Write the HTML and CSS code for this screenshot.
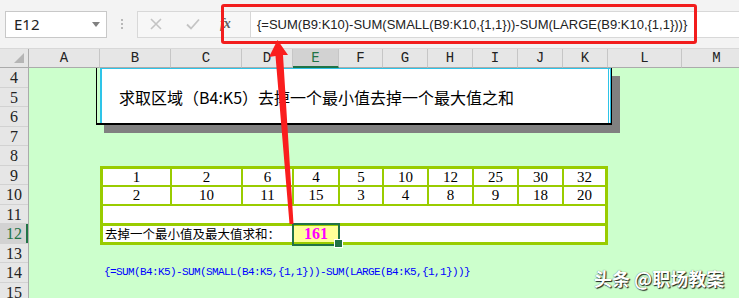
FILE: index.html
```html
<!DOCTYPE html>
<html lang="zh">
<head>
<meta charset="utf-8">
<title>Excel</title>
<link rel="stylesheet" href="styles.css">
</head>
<body>
<div class="app">
  <div class="toolbar">
    <div class="namebox"><span class="nb-text">E12</span><span class="dd"></span></div>
    <div class="dots"><i></i><i></i><i></i></div>
    <div class="fbtns">
      <svg class="ico-x" width="14" height="14" viewBox="0 0 14 14"><path d="M2 2 L12 12 M12 2 L2 12" stroke="#c4c4c4" stroke-width="1.6" fill="none"/></svg>
      <svg class="ico-ok" width="16" height="14" viewBox="0 0 16 14"><path d="M2 7.5 L6 11.5 L14 2.5" stroke="#c4c4c4" stroke-width="1.8" fill="none"/></svg>
      <span class="fx">fx</span>
    </div>
    <div class="finput">{=SUM(B9:K10)-SUM(SMALL(B9:K10,{1,1}))-SUM(LARGE(B9:K10,{1,1}))}</div>
    <div class="redbox"></div>
  </div>
  <div class="colheads">
    <div class="corner"><span class="tri"></span></div>
    <div class="ch w-a">A</div>
    <div class="ch w-b">B</div>
    <div class="ch w-c">C</div>
    <div class="ch w-d">D</div>
    <div class="ch w-e active">E</div>
    <div class="ch w-f">F</div>
    <div class="ch w-g">G</div>
    <div class="ch w-h">H</div>
    <div class="ch w-i">I</div>
    <div class="ch w-j">J</div>
    <div class="ch w-k">K</div>
    <div class="ch w-l">L</div>
    <div class="ch w-m">M</div>
  </div>
  <div class="sheet">
    <div class="rowheads">
      <div class="rh">4</div>
      <div class="rh">5</div>
      <div class="rh">6</div>
      <div class="rh">7</div>
      <div class="rh">8</div>
      <div class="rh">9</div>
      <div class="rh">10</div>
      <div class="rh">11</div>
      <div class="rh active">12</div>
      <div class="rh">13</div>
      <div class="rh">14</div>
      <div class="rh">15</div>
    </div>
    <div class="cells">
      <div class="textbox">
        <div class="tb-inner">求取区域（B4:K5）去掉一个最小值去掉一个最大值之和</div>
      </div>
      <div class="tbl">
        <div class="c">1</div><div class="c">2</div><div class="c">6</div><div class="c">4</div><div class="c">5</div><div class="c">10</div><div class="c">12</div><div class="c">25</div><div class="c">30</div><div class="c">32</div>
        <div class="c">2</div><div class="c">10</div><div class="c">11</div><div class="c">15</div><div class="c">3</div><div class="c">4</div><div class="c">8</div><div class="c">9</div><div class="c">18</div><div class="c">20</div>
        <div class="c span-all"></div>
        <div class="c label r12">去掉一个最小值及最大值求和：</div>
        <div class="c result r12">161</div>
        <div class="c span-rest r12"></div>
      </div>
      <div class="formula">{=SUM(B4:K5)-SUM(SMALL(B4:K5,{1,1}))-SUM(LARGE(B4:K5,{1,1}))}</div>
    </div>
  </div>
  <svg class="arrow" width="739" height="298" viewBox="0 0 739 298">
    <polygon points="277.5,40 269,57 275.5,56 289.5,224 293.5,224 283,55 288,55" fill="#fa1e1e"/>
  </svg>
  <div class="watermark">头条 @职场教案</div>
</div>
</body>
</html>
```

FILE: styles.css
```css
* { box-sizing: border-box; }
html, body { margin: 0; padding: 0; }
body {
  width: 739px;
  height: 298px;
  overflow: hidden;
  background: #ccffcc;
  font-family: "Liberation Serif", serif;
}
.app {
  position: relative;
  width: 739px;
  height: 298px;
  overflow: hidden;
}

/* toolbar */
.toolbar {
  position: relative;
  height: 48px;
  background: #f3f3f3;
  display: flex;
  align-items: center;
  padding-left: 5px;
}
.namebox {
  width: 102px;
  height: 27px;
  background: #fff;
  border: 1px solid #c8c8c8;
  display: flex;
  align-items: center;
  justify-content: space-between;
  padding: 0 6px 0 8px;
  font-family: "Noto Sans", sans-serif;
  font-size: 15px;
  color: #222;
}
.dd {
  width: 0;
  height: 0;
  border-left: 4px solid transparent;
  border-right: 4px solid transparent;
  border-top: 5px solid #808080;
}
.dots {
  width: 30px;
  height: 27px;
  display: flex;
  flex-direction: column;
  align-items: center;
  justify-content: center;
  gap: 2px;
}
.dots i {
  width: 2px;
  height: 2px;
  background: #b8b8b8;
}
.fbtns {
  width: 113px;
  height: 27px;
  background: #f7f7f7;
  border: 1px solid #d8d8d8;
  border-right: none;
  display: flex;
  align-items: center;
  padding-left: 11px;
}
.ico-x { margin-right: 22px; }
.ico-ok { margin-right: 19px; }
.fx {
  font-family: "Liberation Serif", serif;
  font-style: italic;
  font-weight: bold;
  font-size: 14px;
  color: #606060;
  letter-spacing: -1px;
}
.finput {
  flex: 1;
  height: 27px;
  background: #fff;
  border: 1px solid #d8d8d8;
  border-right: none;
  padding-left: 6px;
  display: flex;
  align-items: center;
  font-family: "Liberation Sans", sans-serif;
  font-size: 13px;
  color: #222;
  white-space: nowrap;
}
.redbox {
  position: absolute;
  left: 221px;
  top: 4px;
  width: 476px;
  height: 40px;
  border: 3.5px solid #f21d1d;
  border-radius: 3px;
}

/* column headers */
.colheads {
  display: flex;
  height: 20px;
  background: #e6e6e6;
  border-top: 1px solid #d8d8d8;
}
.corner {
  width: 29px;
  flex: none;
  position: relative;
  border-right: 1px solid #ababab;
  border-bottom: 1px solid #ababab;
}
.tri {
  position: absolute;
  right: 4px;
  bottom: 4px;
  width: 0;
  height: 0;
  border-left: 10px solid transparent;
  border-bottom: 10px solid #b5b5b5;
}
.ch {
  flex: none;
  border-right: 1px solid #c6c6c6;
  border-bottom: 1px solid #ababab;
  text-align: center;
  font-family: "Liberation Mono", monospace;
  font-size: 14px;
  line-height: 19px;
  color: #222;
}
.ch.active {
  background: #d2d2d2;
  color: #217346;
  border-bottom: 2px solid #217346;
}
.w-a { width: 71px; }
.w-b { width: 71px; }
.w-c { width: 71px; }
.w-d { width: 51px; }
.w-e { width: 46px; }
.w-f { width: 44px; }
.w-g { width: 45px; }
.w-h { width: 45px; }
.w-i { width: 45px; }
.w-j { width: 45px; }
.w-k { width: 45px; }
.w-l { width: 74px; }
.w-m { width: 70px; }

/* sheet */
.sheet {
  display: flex;
  height: 230px;
}
.rowheads {
  width: 29px;
  flex: none;
  background: #e6e6e6;
  border-right: 1px solid #ababab;
}
.rh {
  height: 19.5px;
  border-bottom: 1px solid #d2d2d2;
  text-align: center;
  font-family: "Liberation Serif", serif;
  font-size: 16px;
  line-height: 19px;
  color: #222;
}
.rh.active {
  background: #d2d2d2;
  color: #217346;
  box-shadow: inset -2px 0 0 #217346;
}
.cells {
  flex: 1;
  position: relative;
  background: #ccffcc;
  padding-left: 71px;
  padding-top: 97.5px;
}

/* text box */
.textbox {
  position: absolute;
  left: 67px;
  top: 0;
  width: 516px;
  height: 57px;
  border: solid #000;
  border-width: 0 1px 2px 1px;
  box-shadow: 8px 8px 0 #808080;
}
.tb-inner {
  position: absolute;
  left: 3px;
  top: 0;
  right: 0;
  bottom: 0;
  background: #fff;
  border-left: 2px solid #2ec4e8;
  border-top: 1px solid #2ec4e8;
  border-right: 3px double #2ec4e8;
  padding: 18px 0 0 17px;
  font-family: "Noto Sans CJK SC", sans-serif;
  font-size: 16px;
  line-height: 20px;
  color: #000;
  white-space: nowrap;
}

/* data table */
.tbl {
  display: grid;
  width: 508px;
  grid-template-columns: 67px 69px 49px 44px 42px 43px 43px 43px 43px 41px;
  grid-template-rows: 16.5px 16.5px 17px 17.5px;
  column-gap: 2px;
  row-gap: 2px;
  padding: 3px;
  background: #99cc00;
}
.c {
  background: #fff;
  text-align: center;
  font-family: "Liberation Serif", serif;
  font-size: 15px;
  line-height: 17px;
  color: #000;
}
.span-all { grid-column: 1 / -1; }
.r12 { border-top: 1px solid #99cc00; }
.label {
  grid-column: 1 / 4;
  text-align: left;
  padding-left: 2px;
  font-family: "Noto Sans CJK SC", sans-serif;
  font-size: 12.5px;
  line-height: 16px;
  white-space: nowrap;
}
.result {
  position: relative;
  background: #ffff99;
  color: #ff00ff;
  font-weight: bold;
  font-size: 16px;
  line-height: 16px;
}
.result::after {
  content: "";
  position: absolute;
  left: -2px;
  right: -2px;
  top: -3px;
  bottom: -3.5px;
  border: 2px solid #217346;
}
.result::before {
  content: "";
  position: absolute;
  right: -5px;
  bottom: -6px;
  width: 7px;
  height: 7px;
  background: #217346;
  border: 1px solid #fff;
  z-index: 1;
}
.span-rest { grid-column: 5 / -1; }

.formula {
  margin-top: 18px;
  padding-left: 4px;
  height: 19.5px;
  font-family: "Liberation Mono", monospace;
  font-size: 11px;
  letter-spacing: -0.6px;
  line-height: 19.5px;
  color: #0000ff;
  white-space: nowrap;
}

/* overlays */
.arrow {
  position: absolute;
  left: 0;
  top: 0;
  pointer-events: none;
}
.watermark {
  position: absolute;
  left: 594px;
  top: 267px;
  font-family: "Noto Sans CJK SC", sans-serif;
  font-size: 18px;
  line-height: 22px;
  font-weight: bold;
  color: #fff;
  white-space: nowrap;
  text-shadow: 1px 1px 1px rgba(0,0,0,0.85), 0 0 1px rgba(0,0,0,0.6);
}
```
